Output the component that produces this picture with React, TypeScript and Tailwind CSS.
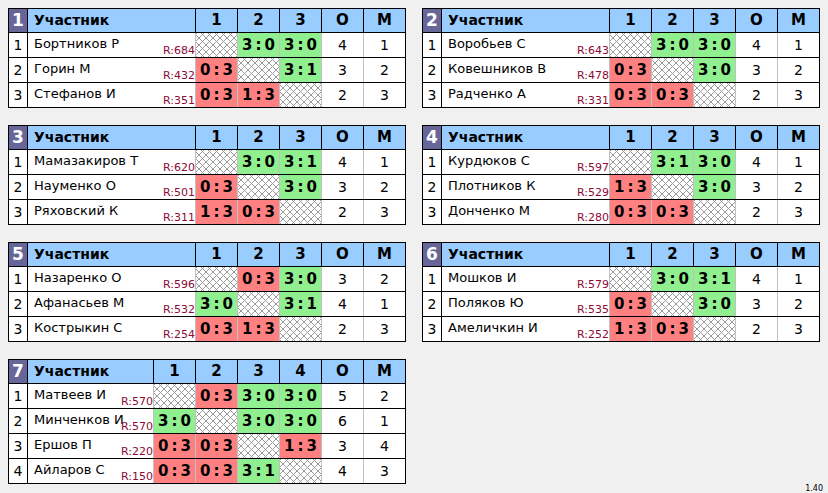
import React from "react";

type Cell = "X" | string;
type Player = { name: string; r: number; res: Cell[]; o: number; m: number };
type Group = { id: number; nameW: string; players: Player[] };

const groups: Group[] = [
  {
    id: 1,
    nameW: "w-[168px]",
    players: [
      { name: "Бортников Р", r: 684, res: ["X", "3:0", "3:0"], o: 4, m: 1 },
      { name: "Горин М", r: 432, res: ["0:3", "X", "3:1"], o: 3, m: 2 },
      { name: "Стефанов И", r: 351, res: ["0:3", "1:3", "X"], o: 2, m: 3 },
    ],
  },
  {
    id: 2,
    nameW: "w-[168px]",
    players: [
      { name: "Воробьев С", r: 643, res: ["X", "3:0", "3:0"], o: 4, m: 1 },
      { name: "Ковешников В", r: 478, res: ["0:3", "X", "3:0"], o: 3, m: 2 },
      { name: "Радченко А", r: 331, res: ["0:3", "0:3", "X"], o: 2, m: 3 },
    ],
  },
  {
    id: 3,
    nameW: "w-[168px]",
    players: [
      { name: "Мамазакиров Т", r: 620, res: ["X", "3:0", "3:1"], o: 4, m: 1 },
      { name: "Науменко О", r: 501, res: ["0:3", "X", "3:0"], o: 3, m: 2 },
      { name: "Ряховский К", r: 311, res: ["1:3", "0:3", "X"], o: 2, m: 3 },
    ],
  },
  {
    id: 4,
    nameW: "w-[168px]",
    players: [
      { name: "Курдюков С", r: 597, res: ["X", "3:1", "3:0"], o: 4, m: 1 },
      { name: "Плотников К", r: 529, res: ["1:3", "X", "3:0"], o: 3, m: 2 },
      { name: "Донченко М", r: 280, res: ["0:3", "0:3", "X"], o: 2, m: 3 },
    ],
  },
  {
    id: 5,
    nameW: "w-[168px]",
    players: [
      { name: "Назаренко О", r: 596, res: ["X", "0:3", "3:0"], o: 3, m: 2 },
      { name: "Афанасьев М", r: 532, res: ["3:0", "X", "3:1"], o: 4, m: 1 },
      { name: "Кострыкин С", r: 254, res: ["0:3", "1:3", "X"], o: 2, m: 3 },
    ],
  },
  {
    id: 6,
    nameW: "w-[168px]",
    players: [
      { name: "Мошков И", r: 579, res: ["X", "3:0", "3:1"], o: 4, m: 1 },
      { name: "Поляков Ю", r: 535, res: ["0:3", "X", "3:0"], o: 3, m: 2 },
      { name: "Амеличкин И", r: 252, res: ["1:3", "0:3", "X"], o: 2, m: 3 },
    ],
  },
  {
    id: 7,
    nameW: "w-[126px]",
    players: [
      { name: "Матвеев И", r: 570, res: ["X", "0:3", "3:0", "3:0"], o: 5, m: 2 },
      { name: "Минченков И", r: 570, res: ["3:0", "X", "3:0", "3:0"], o: 6, m: 1 },
      { name: "Ершов П", r: 220, res: ["0:3", "0:3", "X", "1:3"], o: 3, m: 4 },
      { name: "Айларов С", r: 150, res: ["0:3", "0:3", "3:1", "X"], o: 4, m: 3 },
    ],
  },
];

const hatch =
  "bg-white bg-[image:repeating-linear-gradient(45deg,#9a9a9a_0_1px,transparent_1px_5px),repeating-linear-gradient(-45deg,#9a9a9a_0_1px,transparent_1px_5px)]";

function ScoreCell({ v }: { v: Cell }) {
  if (v === "X") {
    return <div className={`w-[42px] h-full border-r border-[#c0c0c0] ${hatch}`} />;
  }
  const [a, b] = v.split(":").map(Number);
  const win = a > b;
  return (
    <div
      className={`w-[42px] h-full border-r border-[#c0c0c0] flex items-center justify-center font-bold text-[15px] ${
        win ? "bg-[#90f090]" : "bg-[#ff8080]"
      }`}
    >
      <span>{a}</span>
      <span className="mx-[3px]">:</span>
      <span>{b}</span>
    </div>
  );
}

function Table({ g }: { g: Group }) {
  const n = g.players.length;
  const cols = Array.from({ length: n }, (_, i) => i + 1);
  return (
    <div className="w-[398px] border border-black bg-white">
      <div className="flex h-[23px] bg-[#99ccff] font-bold">
        <div className="w-[19px] h-full border-r border-black bg-[#666699] text-white text-[17px] flex items-center justify-center">
          {g.id}
        </div>
        <div className={`${g.nameW} h-full border-r border-black flex items-center pl-[6px] text-[14px]`}>
          Участник
        </div>
        {cols.map((c) => (
          <div key={c} className="w-[42px] h-full border-r border-black flex items-center justify-center text-[15px]">
            {c}
          </div>
        ))}
        <div className="w-[42px] h-full border-r border-black flex items-center justify-center text-[15px]">O</div>
        <div className="w-[41px] h-full flex items-center justify-center text-[15px]">M</div>
      </div>
      {g.players.map((p, i) => (
        <div key={i} className="flex h-[25px] border-t border-black">
          <div className="w-[19px] h-full border-r border-black flex items-center justify-center text-[14px]">
            {i + 1}
          </div>
          <div className={`${g.nameW} h-full border-r border-[#c0c0c0] relative`}>
            <span className="absolute left-[6px] top-[3px] text-[13px] leading-[16px] whitespace-nowrap">{p.name}</span>
            <span className="absolute right-0 bottom-[0px] text-[11px] leading-[13px] text-[#8c0a36]">R:{p.r}</span>
          </div>
          {p.res.map((v, j) => (
            <ScoreCell key={j} v={v} />
          ))}
          <div className="w-[42px] h-full border-r border-[#c0c0c0] flex items-center justify-center text-[14px]">
            {p.o}
          </div>
          <div className="w-[41px] h-full flex items-center justify-center text-[14px]">{p.m}</div>
        </div>
      ))}
    </div>
  );
}

export default function App() {
  return (
    <div className="w-[828px] h-[493px] bg-[#f0f0f0] pt-2 pl-2 font-['Tahoma','DejaVu_Sans',sans-serif] text-black overflow-hidden">
      <div className="grid grid-cols-[398px_398px] gap-x-4 gap-y-[17px]">
        {groups.map((g) => (
          <Table key={g.id} g={g} />
        ))}
      </div>
      <div className="flex justify-end pr-[5px] mt-[1px] text-[8px] leading-[8px]">1.40</div>
    </div>
  );
}
